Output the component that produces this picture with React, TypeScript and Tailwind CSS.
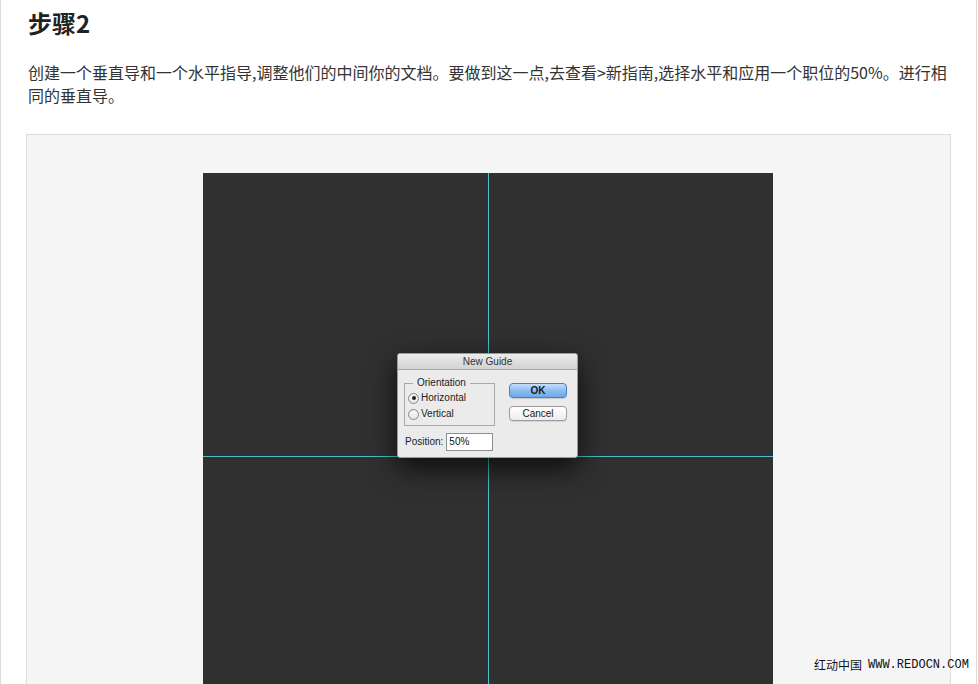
import React from "react";

const cjk = { fontFamily: '"Noto Sans CJK SC", "Noto Sans", sans-serif' };
const mac = { fontFamily: '"Lucida Grande", "Liberation Sans", "DejaVu Sans", sans-serif' };

function Radio({ checked, label }: { checked?: boolean; label: string }) {
  return (
    <div className="flex items-center h-[16px]">
      <div className="w-[11px] h-[11px] rounded-full border border-[#8a8a8a] bg-gradient-to-b from-white to-[#e4e4e4] flex items-center justify-center shadow-[inset_0_1px_1px_rgba(0,0,0,0.1)]">
        {checked && <div className="w-[4px] h-[4px] rounded-full bg-[#222]" />}
      </div>
      <span className="ml-[2px] text-[10px] text-[#222] leading-none" style={mac}>
        {label}
      </span>
    </div>
  );
}

function Dialog() {
  return (
    <div className="absolute left-[194px] top-[180px] w-[181px] h-[105px] bg-[#ebebeb] rounded-[3px] border border-[#9a9a9a] shadow-[0_10px_28px_rgba(0,0,0,0.75)] overflow-hidden">
      <div className="h-[16px] bg-gradient-to-b from-[#ececec] to-[#d2d2d2] border-b border-[#a8a8a8] flex items-center justify-center">
        <span className="text-[10px] text-[#333] leading-none" style={mac}>
          New Guide
        </span>
      </div>
      <div className="relative">
        <div className="absolute left-[6px] top-[13px] w-[91px] h-[43px] border border-[#a9a9a9]">
          <div className="absolute left-[8px] -top-[7px] px-[4px] bg-[#ebebeb] text-[10px] leading-[12px] text-[#222]" style={mac}>
            Orientation
          </div>
          <div className="absolute left-[3px] top-[6px] flex flex-col">
            <Radio checked label="Horizontal" />
            <Radio label="Vertical" />
          </div>
        </div>
        <div className="absolute left-[111px] top-[13px] w-[58px] h-[15px] rounded-[4px] border border-[#4f7fbf] bg-gradient-to-b from-[#c3defa] via-[#8ebdf0] to-[#6ea8ea] flex items-center justify-center shadow-[0_1px_1px_rgba(0,0,0,0.15)]">
          <span className="text-[10px] font-bold text-[#1a1a1a] leading-none" style={mac}>
            OK
          </span>
        </div>
        <div className="absolute left-[111px] top-[36px] w-[58px] h-[15px] rounded-[4px] border border-[#9c9c9c] bg-gradient-to-b from-white to-[#ededed] flex items-center justify-center shadow-[0_1px_1px_rgba(0,0,0,0.1)]">
          <span className="text-[10px] text-[#1a1a1a] leading-none" style={mac}>
            Cancel
          </span>
        </div>
        <div className="absolute left-[7px] top-[63px] h-[18px] flex items-center">
          <span className="text-[10px] text-[#222] leading-none" style={mac}>
            Position:
          </span>
          <div className="ml-[3px] w-[47px] h-[18px] bg-white border border-[#8d8d8d] flex items-center pl-[2px]">
            <span className="text-[10px] text-[#111] leading-none" style={mac}>
              50%
            </span>
          </div>
        </div>
      </div>
    </div>
  );
}

export default function App() {
  return (
    <div className="w-[978px] h-[684px] bg-white overflow-hidden relative">
      <div className="w-[977px] h-full border-l border-r border-[#dcdcdc] pl-[25px] pr-[25px]">
        <div className="pt-[10px] pl-[2px] text-[24px] leading-[26px] font-bold text-[#222]" style={cjk}>
          步骤2
        </div>
        <p
          className="mt-[25px] pl-[2px] text-[16px] leading-[23px] text-[#333]"
          style={cjk}
        >
          创建一个垂直导和一个水平指导,调整他们的中间你的文档。要做到这一点,去查看&gt;新指南,选择水平和应用一个职位的50%。进行相同的垂直导。
        </p>
        <div className="mt-[27px] border border-[#dcdcdc] bg-[#f5f5f5] pt-[38px] pr-[1px] flex justify-center h-[600px]">
          <div className="w-[570px] h-[570px] bg-[#303030] relative shrink-0">
            <div className="absolute left-[285px] top-0 w-px h-full bg-[#4fc0c8]" />
            <div className="absolute top-[283px] left-0 h-px w-full bg-[#4fc0c8]" />
            <Dialog />
          </div>
        </div>
      </div>
      <div className="absolute left-[814px] top-[658px] flex items-center text-[12px] leading-[14px] text-[#111]">
        <span style={cjk}>红动中国</span>
        <span className="ml-[6px]" style={{ fontFamily: '"Liberation Mono", monospace' }}>
          WWW.REDOCN.COM
        </span>
      </div>
    </div>
  );
}
